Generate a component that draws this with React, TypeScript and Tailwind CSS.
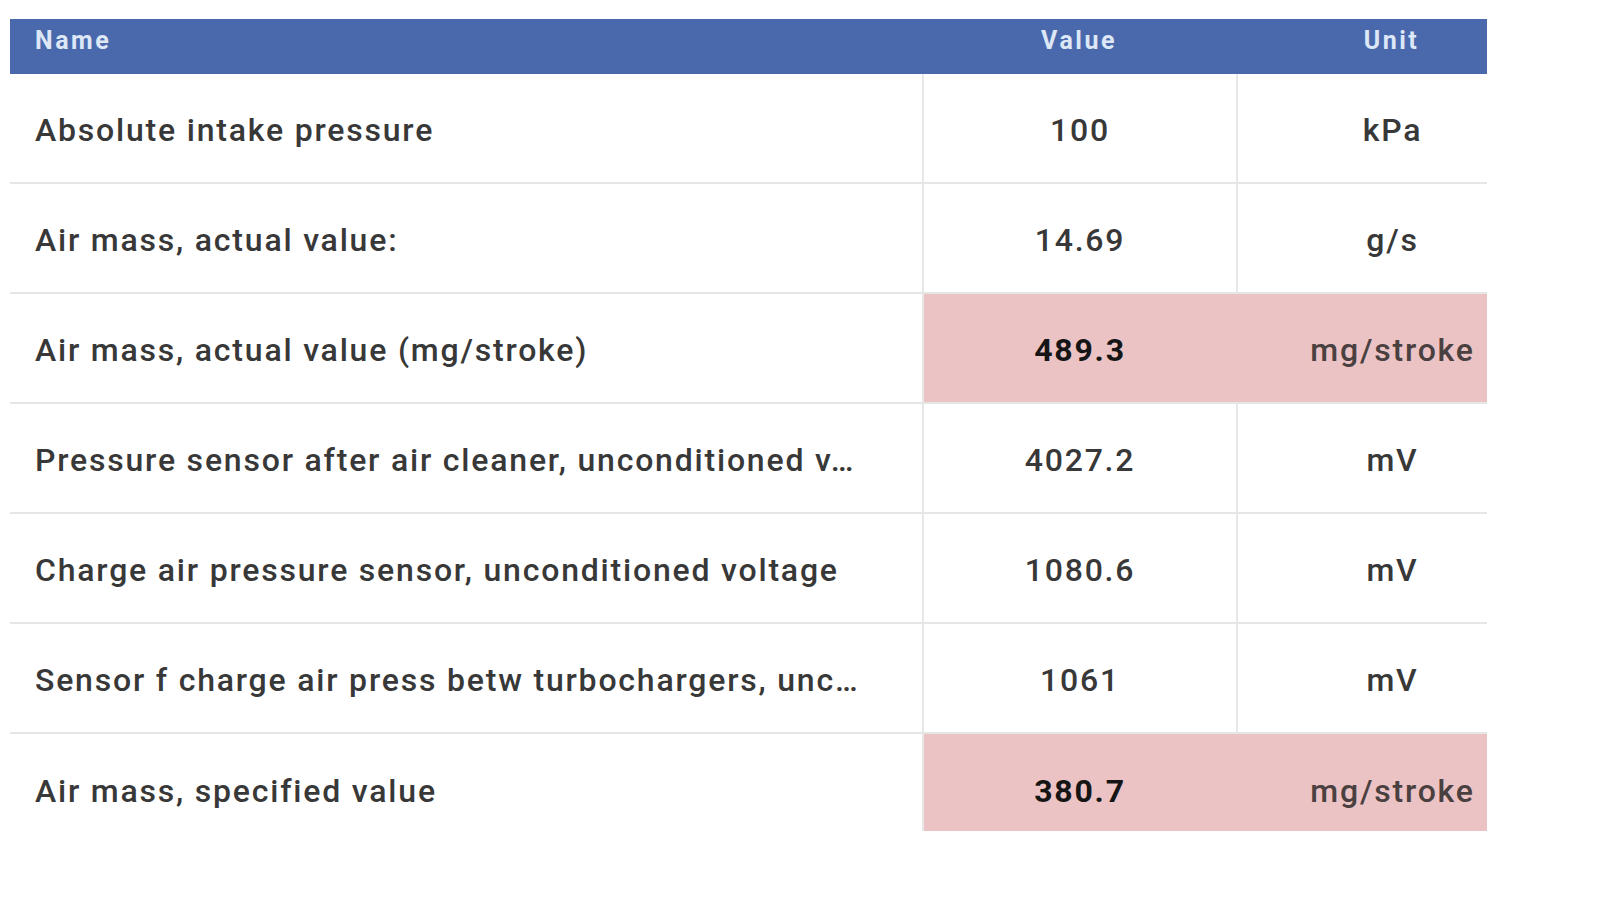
export default function App() {
    const rows = [
        { name: "Absolute intake pressure", value: "100", unit: "kPa", alert: false },
        { name: "Air mass, actual value:", value: "14.69", unit: "g/s", alert: false },
        { name: "Air mass, actual value (mg/stroke)", value: "489.3", unit: "mg/stroke", alert: true },
        { name: "Pressure sensor after air cleaner, unconditioned v…", value: "4027.2", unit: "mV", alert: false },
        { name: "Charge air pressure sensor, unconditioned voltage", value: "1080.6", unit: "mV", alert: false },
        { name: "Sensor f charge air press betw turbochargers, unc…", value: "1061", unit: "mV", alert: false },
        { name: "Air mass, specified value", value: "380.7", unit: "mg/stroke", alert: true },
    ];

    return (
        <div className="w-[1600px] h-[900px] bg-white pt-[19px] pl-[10px] font-['Roboto',sans-serif]">
            <div className="w-[1477px]">
                {/* header */}
                <div className="flex h-[55px] bg-[#4a69ad] text-[#dde7f6] text-[25px] font-bold tracking-[2.5px]">
                    <div className="w-[912px] pl-[25px] pt-[3px]">Name</div>
                    <div className="w-[314px] text-center pt-[3px]">Value</div>
                    <div className="flex-1 text-center pl-[60px] pt-[3px]">Unit</div>
                </div>

                {rows.map((r, i) => {
                    const last = i === rows.length - 1;
                    const pad = last ? "pt-[16px]" : "pt-[4px]";
                    return (
                        <div key={i} className={`flex text-[32px] tracking-[1.8px] ${last ? "h-[97px]" : "h-[110px] border-b-2 border-[#e6e6e6]"}`}>
                            <div className={`w-[912px] flex items-center pl-[25px] font-medium text-[#383838] ${pad}`}>
                                {r.name}
                            </div>
                            <div className={`w-[314px] flex items-center justify-center border-l-2 border-[#e8e8e8] ${r.alert ? "bg-[#ebc3c4] font-bold text-[#151515]" : "font-medium text-[#383838]"} ${pad}`}>
                                {r.value}
                            </div>
                            <div className={`flex-1 flex items-center justify-center pl-[60px] border-l-2 font-medium ${r.alert ? "bg-[#ebc3c4] border-[#ebc3c4] text-[#4a4040]" : "border-[#e8e8e8] text-[#383838]"} ${pad}`}>
                                {r.unit}
                            </div>
                        </div>
                    );
                })}
            </div>
        </div>
    );
}
